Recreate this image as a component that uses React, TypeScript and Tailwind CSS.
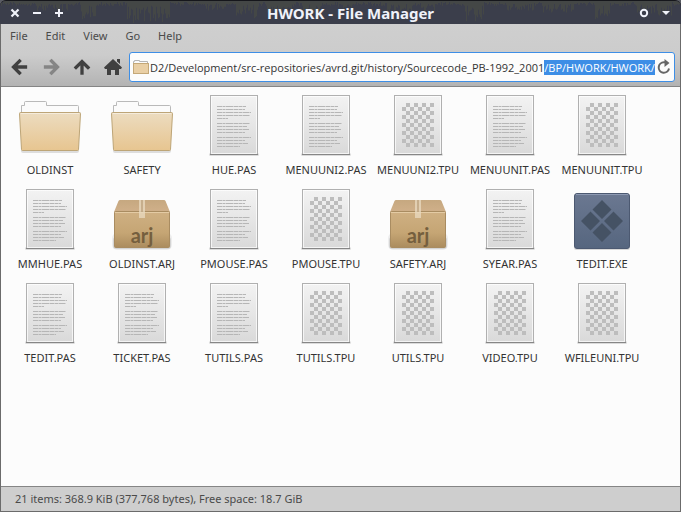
import React, { useEffect, useRef } from 'react';

type FileKind = 'folder' | 'text' | 'binary' | 'archive' | 'exe';

interface FileEntry {
  name: string;
  kind: FileKind;
}

const MENUS = ['File', 'Edit', 'View', 'Go', 'Help'];

const BASE_PATH =
  'D2/Development/src-repositories/avrd.git/history/Sourcecode_PB-1992_2001';
const TYPED_PATH = '/BP/HWORK/HWORK/';

const FILES: FileEntry[] = [
  { name: 'OLDINST', kind: 'folder' },
  { name: 'SAFETY', kind: 'folder' },
  { name: 'HUE.PAS', kind: 'text' },
  { name: 'MENUUNI2.PAS', kind: 'text' },
  { name: 'MENUUNI2.TPU', kind: 'binary' },
  { name: 'MENUUNIT.PAS', kind: 'text' },
  { name: 'MENUUNIT.TPU', kind: 'binary' },
  { name: 'MMHUE.PAS', kind: 'text' },
  { name: 'OLDINST.ARJ', kind: 'archive' },
  { name: 'PMOUSE.PAS', kind: 'text' },
  { name: 'PMOUSE.TPU', kind: 'binary' },
  { name: 'SAFETY.ARJ', kind: 'archive' },
  { name: 'SYEAR.PAS', kind: 'text' },
  { name: 'TEDIT.EXE', kind: 'exe' },
  { name: 'TEDIT.PAS', kind: 'text' },
  { name: 'TICKET.PAS', kind: 'text' },
  { name: 'TUTILS.PAS', kind: 'text' },
  { name: 'TUTILS.TPU', kind: 'binary' },
  { name: 'UTILS.TPU', kind: 'binary' },
  { name: 'VIDEO.TPU', kind: 'binary' },
  { name: 'WFILEUNI.TPU', kind: 'binary' },
];

// y, width of every line of "writing" on the text icon
const TEXT_LINES = [
  [13, 29], [16, 28], [19, 34], [22, 33], [25, 11],
  [30, 33], [33, 30], [36, 32], [39, 28],
  [44, 34], [47, 28], [50, 31], [53, 23],
];

function FolderIcon() {
  return (
    <svg className="w-16 h-16" viewBox="0 0 64 64">
      <rect x="3" y="56" width="58" height="4" rx="2" fill="#000" opacity="0.12" />
      <path d="M3.500 22V12.500H6.500V9.500Q6.500 8.500 7.500 8.500H27.500Q28.500 8.500 28.500 9.500V12.500H59.500Q60.500 12.500 60.500 13.500V22" fill="#fbfbfb" stroke="#b9b9b9" />
      <path d="M1.500 20.500Q1.500 19.500 2.500 19.500H61.500Q62.500 19.500 62.500 20.500L60.500 56.500Q60.500 57.500 59.500 57.500H4.500Q3.500 57.500 3.500 56.500Z" fill="url(#folderFront)" stroke="#bda577" />
      <path d="M3 20.500H61" stroke="#f5ecdc" />
    </svg>
  );
}

function Sheet({ children }: { children: React.ReactNode }) {
  return (
    <svg className="w-16 h-16" viewBox="0 0 64 64">
      <rect x="7" y="60" width="50" height="3" rx="1.500" fill="#000" opacity="0.13" />
      <rect x="8.500" y="2.500" width="47" height="59" fill="url(#sheetFill)" stroke="#b0b0b0" />
      <rect x="9.500" y="3.500" width="45" height="57" fill="none" stroke="#fff" opacity="0.7" />
      <path d="M8 61.500H56" stroke="#868686" />
      {children}
    </svg>
  );
}

function TextIcon() {
  return (
    <Sheet>
      {TEXT_LINES.map(([y, width]) => (
        <path
          key={y}
          d={`M15 ${y + 0.5}h${width}`}
          stroke="#b6b6b6"
          strokeDasharray="5 0.500 3 0.500 7 0.500"
        />
      ))}
    </Sheet>
  );
}

function BinaryIcon() {
  return (
    <Sheet>
      <rect x="16" y="10" width="32" height="44" fill="url(#checks)" />
    </Sheet>
  );
}

function ArchiveIcon() {
  return (
    <svg className="w-16 h-16" viewBox="0 0 64 64">
      <rect x="2" y="46" width="60" height="17" rx="5" fill="#000" opacity="0.06" />
      <rect x="3" y="50" width="58" height="12" rx="3" fill="#000" opacity="0.1" />
      <path d="M4 25L8.500 14Q9 13 10 13H54Q55 13 55.500 14L60 25Z" fill="url(#boxTop)" />
      <rect x="4.500" y="24.500" width="55" height="36" rx="1" fill="url(#boxFront)" stroke="#a98c61" />
      <path d="M5 25.500H59" stroke="#e4cba4" />
      <path d="M29 13h6v18h-6z" fill="#e9dbc2" opacity="0.75" />
      <path d="M32 13v12" stroke="#ab8d66" />
      <text x="32" y="56" textAnchor="middle" className="font-['Lato',sans-serif] text-[20px] font-bold" fill="#755f3e">
        arj
      </text>
    </svg>
  );
}

function ExeIcon() {
  return (
    <svg className="w-16 h-16" viewBox="0 0 64 64">
      <rect x="4" y="58" width="56" height="5" rx="2" fill="#000" opacity="0.14" />
      <rect x="4.500" y="6.500" width="55" height="55" rx="2.500" fill="url(#exeFill)" stroke="#4c5971" />
      <path d="M6 7.500H58" stroke="#8d99b2" />
      <path d="M32 13l9.500 9.500L32 32l-9.500-9.500zM20.500 24.500l9.500 9.500-9.500 9.500L11 34zM43.500 24.500L53 34l-9.500 9.500L34 34zM32 36l9.500 9.500L32 55l-9.500-9.500z" fill="#455264" />
    </svg>
  );
}

const ICONS: Record<FileKind, () => React.JSX.Element> = {
  folder: FolderIcon,
  text: TextIcon,
  binary: BinaryIcon,
  archive: ArchiveIcon,
  exe: ExeIcon,
};

// gradients and the checker pattern used by all file icons
function IconDefs() {
  return (
    <svg className="absolute w-0 h-0" aria-hidden="true">
      <defs>
        <linearGradient id="folderFront" x1="0" y1="0" x2="0" y2="1">
          <stop offset="0" stopColor="#ecdcc0" />
          <stop offset="1" stopColor="#e7c590" />
        </linearGradient>
        <linearGradient id="sheetFill" x1="0" y1="0" x2="0" y2="1">
          <stop offset="0" stopColor="#f3f3f3" />
          <stop offset="1" stopColor="#d9d9d9" />
        </linearGradient>
        <linearGradient id="boxTop" x1="0" y1="0" x2="0" y2="1">
          <stop offset="0" stopColor="#c6a880" />
          <stop offset="1" stopColor="#d0b08a" />
        </linearGradient>
        <linearGradient id="boxFront" x1="0" y1="0" x2="0" y2="1">
          <stop offset="0" stopColor="#cfb083" />
          <stop offset="0.6" stopColor="#c5a574" />
          <stop offset="1" stopColor="#ab8c5e" />
        </linearGradient>
        <linearGradient id="exeFill" x1="0" y1="0" x2="0" y2="1">
          <stop offset="0" stopColor="#6b7891" />
          <stop offset="1" stopColor="#56667f" />
        </linearGradient>
        <pattern id="checks" x="16" y="10" width="8" height="8" patternUnits="userSpaceOnUse">
          <path d="M4 0h4v4H4zM0 4h4v4H0z" fill="#bdbdbd" />
        </pattern>
      </defs>
    </svg>
  );
}

// centre, spread and depth of the clusters of streaks
const STREAK_CLUSTERS = [
  [52, 16, 12], [88, 8, 20], [148, 22, 23], [215, 12, 10], [247, 12, 18],
  [280, 14, 15], [312, 10, 18], [345, 8, 10], [400, 14, 12], [428, 8, 14],
  [474, 10, 23], [520, 14, 10], [558, 16, 12], [602, 8, 20], [645, 10, 13], [664, 8, 16],
];

function Streaks() {
  const bars = Array.from({ length: 681 }, (_, x) => {
    const depth = STREAK_CLUSTERS.reduce(
      (max, [centre, spread, d]) => Math.max(max, Math.abs(x - centre) < spread ? d : 0),
      5,
    );
    const noise = Math.abs(Math.sin(x * 12.9898) * 43758.5453) % 1;
    return `M${x} 0h1v${Math.round(depth * (0.2 + noise * 0.8))}h-1z`;
  }).join('');
  return (
    <svg className="absolute inset-0 w-full h-full" viewBox="0 0 681 24" preserveAspectRatio="none">
      <path d={bars} fill="#494b44" opacity="0.7" />
    </svg>
  );
}

function TitleBar() {
  return (
    <header className="relative flex items-center h-6 px-2 rounded-t-md overflow-hidden bg-[#3b3e4b] border-t border-[#15161b] text-[#f0f2fa]">
      <Streaks />
      <div className="relative flex flex-1 gap-x-2">
        <button aria-label="Close" className="w-[14px] h-[14px]">
          <svg viewBox="0 0 14 14"><path d="M3.500 3.500l7 7M10.500 3.500l-7 7" stroke="currentColor" strokeWidth="2.200" /></svg>
        </button>
        <button aria-label="Minimize" className="w-[14px] h-[14px]">
          <svg viewBox="0 0 14 14"><path d="M3 7h8" stroke="currentColor" strokeWidth="2" /></svg>
        </button>
        <button aria-label="Maximize" className="w-[14px] h-[14px]">
          <svg viewBox="0 0 14 14"><path d="M3 7h8M7 3v8" stroke="currentColor" strokeWidth="2" /></svg>
        </button>
      </div>
      <h1 className="relative pl-5 text-[15px] leading-5 font-bold">
        HWORK - File Manager
      </h1>
      <div className="relative flex flex-1 justify-end gap-x-2">
        <button aria-label="Stick" className="w-[14px] h-[14px]">
          <svg viewBox="0 0 14 14"><circle cx="7" cy="7" r="3.200" fill="none" stroke="currentColor" strokeWidth="2" /></svg>
        </button>
        <button aria-label="Window menu" className="w-[14px] h-[14px]">
          <svg viewBox="0 0 14 14"><path d="M3 5h8L7 9z" fill="currentColor" /></svg>
        </button>
      </div>
    </header>
  );
}

function LocationBar() {
  const inputRef = useRef<HTMLInputElement>(null);

  useEffect(() => {
    const input = inputRef.current;
    if (!input) return;
    input.focus();
    input.setSelectionRange(BASE_PATH.length, BASE_PATH.length + TYPED_PATH.length);
  }, []);

  return (
    <div className="flex flex-1 items-center gap-x-px h-[30px] pl-[3px] pr-0.5 rounded-[3px] border border-[#3d8ee6] bg-[#fcfcfc]">
      <svg className="w-4 h-4 shrink-0" viewBox="0 0 16 16">
        <path d="M.5 6V2.500h1v-1h5v1h8v3.500" fill="#fbfbfb" stroke="#b5b5b5" />
        <rect x=".5" y="4.500" width="15" height="10" fill="#e9cfa5" stroke="#c4a878" />
      </svg>
      <input
        ref={inputRef}
        aria-label="Location"
        defaultValue={BASE_PATH + TYPED_PATH}
        spellCheck={false}
        className="flex-1 min-w-0 h-6 font-['Open_Sans',sans-serif] text-[11px] text-[#333] caret-transparent outline-none selection:bg-[#3d8ee6] selection:text-white"
      />
      <button aria-label="Reload" className="w-4 h-4 shrink-0">
        <svg viewBox="0 0 16 16" fill="none" stroke="#666">
          <path d="M13 9.500A5.200 5.200 0 1 1 8 3.300H10" strokeWidth="2" />
          <path d="M8.500 0L13.500 4L8.500 8z" fill="#666" stroke="none" />
        </svg>
      </button>
    </div>
  );
}

function ToolBar() {
  return (
    <div className="flex items-center h-[38px] pl-[9px] pr-[5px]">
      <div className="flex gap-x-[11px] mr-1.5">
        <button aria-label="Back" className="w-5 h-5 text-[#404040]">
          <svg viewBox="0 0 20 20" fill="none" stroke="currentColor" strokeWidth="3.300"><path d="M9.500 4L3.500 10l6 6M5 10H15.500" strokeLinecap="square" /></svg>
        </button>
        <button aria-label="Forward" disabled className="w-5 h-5 text-[#858585]">
          <svg viewBox="0 0 20 20" fill="none" stroke="currentColor" strokeWidth="3.300"><path d="M10.500 4L16.500 10l-6 6M15 10H4.500" strokeLinecap="square" /></svg>
        </button>
        <button aria-label="Up" className="w-5 h-5 text-[#404040]">
          <svg viewBox="0 0 20 20" fill="none" stroke="currentColor" strokeWidth="3.300"><path d="M4 10.500L10 4.500l6 6M10 6v10" strokeLinecap="square" /></svg>
        </button>
        <button aria-label="Home" className="w-5 h-5 text-[#404040]">
          <svg viewBox="0 0 20 20" fill="currentColor"><path d="M10 2l9 8.500-1 1.500h-2v6h-4v-5H8v5H4v-6H2l-1-1.500zM14 2h3v5l-3-2.500z" /></svg>
        </button>
      </div>
      <LocationBar />
    </div>
  );
}

export default function App() {
  return (
    <div className="min-h-screen bg-[#5a5c63] font-['Noto_Sans',sans-serif]">
      <IconDefs />
      <div className="flex flex-col min-h-screen">
        <TitleBar />
        <div className="flex flex-col flex-1 border-x border-b border-[#6b6b6b]">
          <div className="bg-linear-to-b from-[#cfcfcf] via-[#cccccc] to-[#b3b3b3] border-b border-[#858585]">
            <nav className="flex items-center h-6 pl-[9px] gap-x-[18px] text-[11px] text-[#4a4a4a]">
              {MENUS.map((menu) => (
                <button key={menu}>{menu}</button>
              ))}
            </nav>
            <ToolBar />
          </div>
          <main className="flex-1 bg-[#fcfcfc] px-[3px] pt-1.5">
            <ul className="grid grid-cols-[repeat(auto-fill,92px)]">
              {FILES.map(({ name, kind }) => {
                const Icon = ICONS[kind];
                return (
                  <li key={name} className="flex flex-col items-center h-[94px]">
                    <Icon />
                    <span className="mt-[5px] text-[11px] leading-4 text-[#333]">{name}</span>
                  </li>
                );
              })}
            </ul>
          </main>
          <footer className="flex items-center h-[25px] px-3.5 border-t border-[#858585] bg-[#cecece] text-[11px] text-[#4a4a4a]">
            21 items: 368.9 KiB (377,768 bytes), Free space: 18.7 GiB
          </footer>
        </div>
      </div>
    </div>
  );
}
